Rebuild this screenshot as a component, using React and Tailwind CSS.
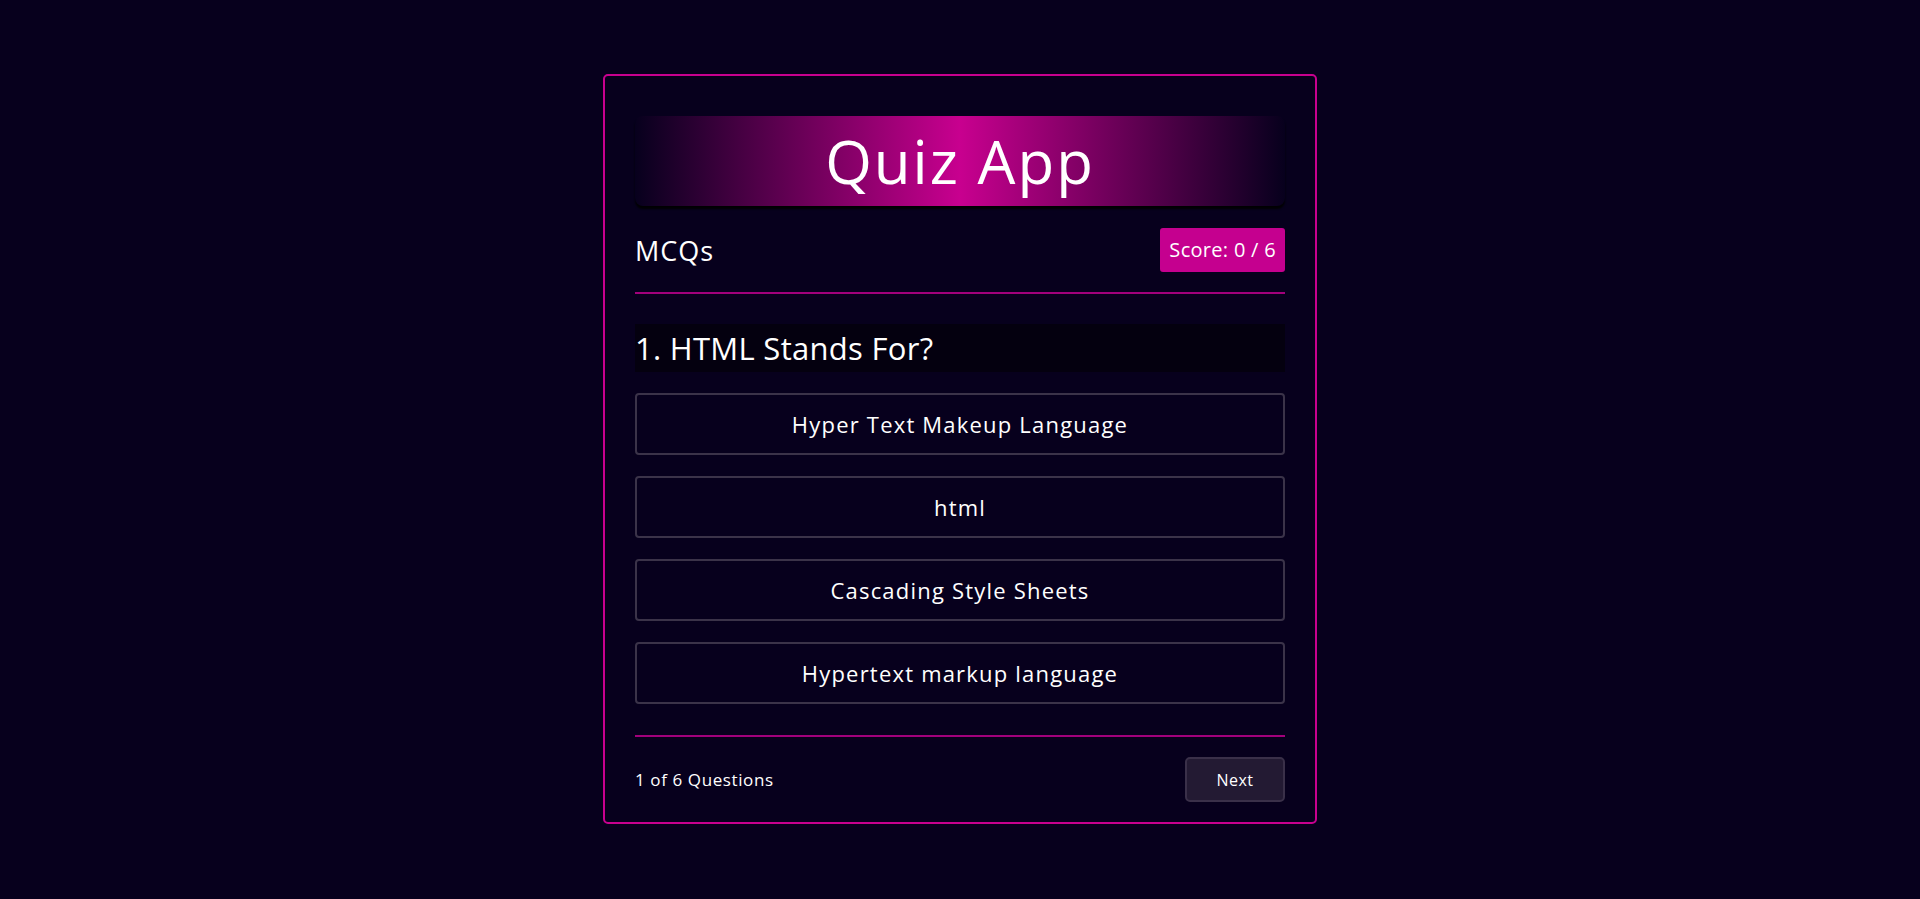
import React from 'react';

const options = [
  'Hyper Text Makeup Language',
  'html',
  'Cascading Style Sheets',
  'Hypertext markup language',
];

const App = () => {
  return (
    <div
      className="min-h-screen w-full bg-[#07001d] text-white flex justify-center pt-[74px]"
      style={{ fontFamily: '"Open Sans", "Noto Sans", sans-serif' }}
    >
      <div className="w-[714px] h-[750px] border-2 border-[#c8008f] rounded-[5px] bg-[#07001d] px-[30px] pt-[40px] pb-[19px] flex flex-col">
        <div className="h-[90px] rounded-[8px] bg-gradient-to-r from-transparent via-[#c8008f] to-transparent shadow-[0_3px_2px_rgba(0,0,0,0.9)] flex items-center justify-center">
          <h1 className="text-[60px] leading-none font-normal tracking-[2px]">Quiz App</h1>
        </div>

        <div className="mt-[22px] h-[44px] flex items-center justify-between">
          <span className="text-[27px] leading-none tracking-[1px]">MCQs</span>
          <span className="h-[44px] px-[9px] flex items-center bg-[#c5008f] rounded-[3px] text-[20px] leading-none tracking-[0.3px]">
            Score: 0 / 6
          </span>
        </div>

        <div className="mt-[20px] h-[2px] bg-[#a1007b]" />

        <div className="mt-[30px] h-[48px] bg-[#04000f] flex items-center">
          <h2 className="text-[31px] leading-none font-normal tracking-[0.3px]">1. HTML Stands For?</h2>
        </div>

        <div className="mt-[21px] flex flex-col gap-[21px]">
          {options.map((opt) => (
            <button
              key={opt}
              className="h-[62px] w-full border-2 border-[#3b3349] rounded-[4px] bg-transparent text-white text-[22px] tracking-[1.2px] flex items-center justify-center"
            >
              {opt}
            </button>
          ))}
        </div>

        <div className="mt-[31px] h-[2px] bg-[#a1007b]" />

        <div className="mt-[20px] h-[45px] flex items-center justify-between">
          <span className="text-[17px] leading-none tracking-[0.6px]">1 of 6 Questions</span>
          <button className="w-[100px] h-[45px] bg-[#231a33] border-2 border-[#3a3049] rounded-[5px] text-white text-[16px] leading-none tracking-[0.5px]">
            Next
          </button>
        </div>
      </div>
    </div>
  );
};

export default App;
